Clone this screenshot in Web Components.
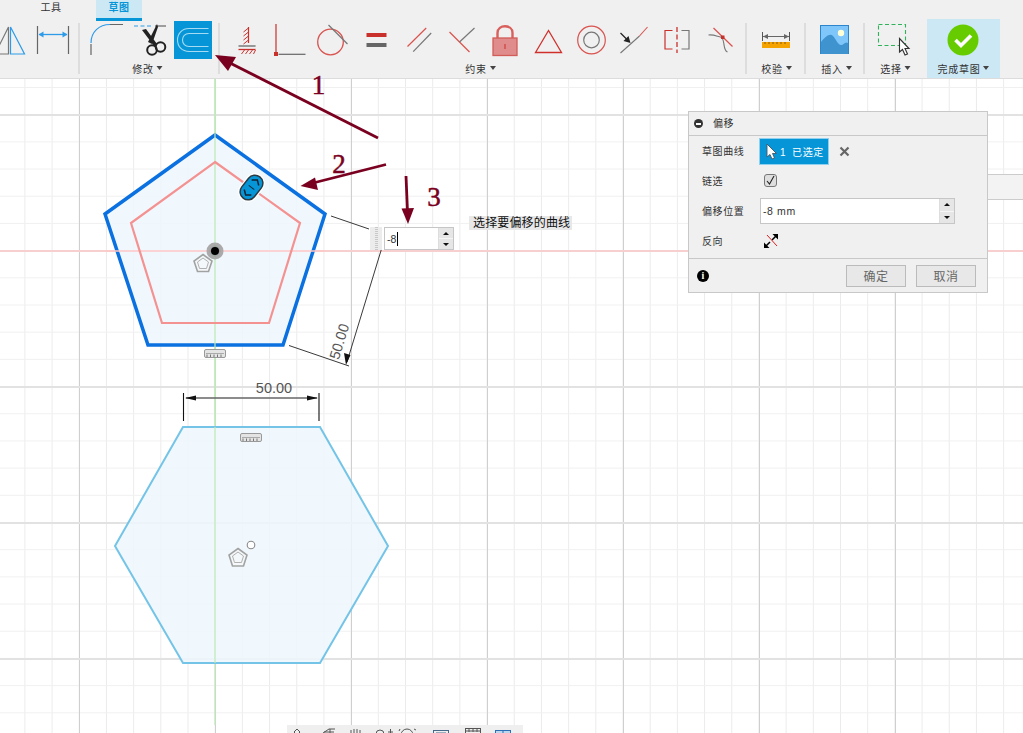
<!DOCTYPE html>
<html lang="zh"><head><meta charset="utf-8"><title>偏移</title>
<style>
html,body{margin:0;padding:0;height:100%;overflow:hidden;background:#fff;font-family:"Liberation Sans","Noto Sans CJK SC",sans-serif}
</style></head><body>
<x-app>
<x-ribbon slot="ribbon">
  <rb-group style="width:78px">
    <rb-tool w="25"><svg width="25" height="38" viewBox="0 21 25 38" fill="none"><path d="M8.5 27V54H-5Z" stroke="#777" stroke-width="1.2"/><path d="M10.5 27V54H24.5Z" stroke="#2d9be8" stroke-width="1.2"/></svg></rb-tool>
    <rb-tool w="12"></rb-tool>
    <rb-tool w="33"><svg width="33" height="38" viewBox="37 21 33 38" fill="none"><path d="M37.5 26V54M68.5 26V54" stroke="#666" stroke-width="1.2"/><path d="M39 34.5H67" stroke="#2d9be8" stroke-width="1.3"/><path d="M38.500 34.500l5-3v6zM67.500 34.500l-5-3v6z" fill="#2d9be8"/></svg></rb-tool>
  </rb-group>
  <rb-sep></rb-sep>
  <rb-group label="修改" offset="-1.5" style="width:138px;padding-left:10px">
    <rb-tool w="34"><svg width="34" height="38" viewBox="90 21 34 38" fill="none"><path d="M91 44V55M110 24.500H123" stroke="#666" stroke-width="1.2"/><path d="M91 43C91 32 99 24.500 110 24.500" stroke="#2d9be8" stroke-width="1.2"/></svg></rb-tool>
    <rb-tool w="10"></rb-tool>
    <rb-tool w="33"><svg width="33" height="38" viewBox="134 21 33 38" fill="none"><path d="M134 26H151" stroke="#2d9be8" stroke-width="1.2" stroke-dasharray="4 2.500"/><path d="M155 26H166" stroke="#666" stroke-width="1.2"/><path d="M142 30l4-1L157 44l-3 2zM157 24l1 3-6 17-4-2z" fill="#222"/><circle cx="152" cy="50" r="4.800" stroke="#222" stroke-width="2"/><circle cx="160.500" cy="47" r="4.800" stroke="#222" stroke-width="2"/></svg></rb-tool>
    <rb-tool w="7"></rb-tool>
    <rb-tool w="38"><svg width="38" height="38" viewBox="174 21 38 38" fill="none"><rect x="174" y="21" width="38" height="38" fill="#0696d7"/><path d="M208.500 28.500H189C182 28.500 177.500 33.500 177.500 40S182 51.500 189 51.500H208.500" stroke="#a5dcf3" stroke-width="1.100"/><path d="M208.500 33.500H189C185 33.500 182.500 36.500 182.500 40S185 46.500 189 46.500H208.500" stroke="#a5dcf3" stroke-width="1.100"/></svg></rb-tool>
  </rb-group>
  <rb-sep></rb-sep>
  <rb-group label="约束" offset="-2" style="width:525px;padding-left:4.5px">
    <rb-tool w="43"><svg width="43" height="38" viewBox="224.500 21 43 38" fill="none"><path d="M248 27V43" stroke="#c9302c" stroke-width="1.200"/><path d="M248 28l-5 4M248 32l-5 4M248 36l-5 4M248 40l-5 4" stroke="#c9302c"/><path d="M238 46H255" stroke="#666" stroke-width="1.300"/><path d="M238 49.500H255" stroke="#c9302c" stroke-width="1.300"/><path d="M241 54l3-4M245 54l3-4M249 54l3-4M253 54l2-4" stroke="#c9302c"/></svg></rb-tool>
    <rb-tool w="43"><svg width="43" height="38" viewBox="267.500 21 43 38" fill="none"><path d="M275.500 24V53" stroke="#c9302c" stroke-width="1.200"/><rect x="273.500" y="52" width="4" height="4" fill="#c9302c"/><path d="M278 54.300H305" stroke="#666" stroke-width="1.200"/></svg></rb-tool>
    <rb-tool w="43"><svg width="43" height="38" viewBox="310.500 21 43 38" fill="none"><circle cx="330" cy="42" r="12.800" stroke="#d9534f" stroke-width="1.300"/><path d="M328 25L347 44" stroke="#777" stroke-width="1.200"/></svg></rb-tool>
    <rb-tool w="43"><svg width="43" height="38" viewBox="353.500 21 43 38"><rect x="366" y="33" width="20" height="4" fill="#c9302c"/><rect x="366" y="43" width="20" height="4" fill="#666"/></svg></rb-tool>
    <rb-tool w="43"><svg width="43" height="38" viewBox="396.500 21 43 38" fill="none"><path d="M407 46.500L425.700 28" stroke="#d9534f" stroke-width="1.200"/><path d="M412.700 51.700L430.700 33" stroke="#777" stroke-width="1.200"/></svg></rb-tool>
    <rb-tool w="43"><svg width="43" height="38" viewBox="439.500 21 43 38" fill="none"><path d="M449 32L469 52" stroke="#d9534f" stroke-width="1.200"/><path d="M459 42L474 28" stroke="#777" stroke-width="1.200"/></svg></rb-tool>
    <rb-tool w="43"><svg width="43" height="38" viewBox="482.500 21 43 38" fill="none"><path d="M497 38V33C497 24 512 24 512 33V38" stroke="#d9605c" stroke-width="2.400"/><rect x="492.500" y="38" width="24" height="17.500" fill="#e08c8c" stroke="#d15c58" stroke-width="1.300"/><path d="M504.500 44V49" stroke="#c9302c"/></svg></rb-tool>
    <rb-tool w="43"><svg width="43" height="38" viewBox="525.500 21 43 38" fill="none"><path d="M548 30.500L535 52.500H561Z" stroke="#d0302c" stroke-width="1.300"/></svg></rb-tool>
    <rb-tool w="43"><svg width="43" height="38" viewBox="568.500 21 43 38" fill="none"><circle cx="591" cy="40" r="13.800" stroke="#d9534f" stroke-width="1.200"/><circle cx="591" cy="40" r="7.800" stroke="#777" stroke-width="1.200"/></svg></rb-tool>
    <rb-tool w="43"><svg width="43" height="38" viewBox="611.500 21 43 38" fill="none"><path d="M620 53L639 36" stroke="#777" stroke-width="1.100"/><path d="M639 36L647 27" stroke="#d9534f" stroke-width="1.100"/><path d="M620 33L626 39" stroke="#222" stroke-width="1.200"/><path d="M630 43l-7-2 5-5z" fill="#222"/></svg></rb-tool>
    <rb-tool w="43"><svg width="43" height="38" viewBox="654.500 21 43 38" fill="none"><path d="M672 30.500H664.500V49H672" stroke="#c9302c" stroke-width="1.200"/><path d="M676.500 27V53" stroke="#c9302c" stroke-width="1.300" stroke-dasharray="5 2.500"/><path d="M681 30.500H688.500V49H681" stroke="#777" stroke-width="1.200"/></svg></rb-tool>
    <rb-tool w="43"><svg width="43" height="38" viewBox="697.500 21 43 38" fill="none"><path d="M713 28L732 46.500" stroke="#d9534f" stroke-width="1.200"/><path d="M708 35C714 34 719 38 721 37M721 37C725 42 722 50 727 52" stroke="#777" stroke-width="1.100"/><rect x="720.500" y="35.500" width="3.500" height="3.500" fill="#c9302c"/></svg></rb-tool>
  </rb-group>
  <rb-sep></rb-sep>
  <rb-group label="校验" offset="1" style="width:57px;padding-left:13px">
    <rb-tool w="32"><svg width="32" height="38" viewBox="760 21 32 38" fill="none"><path d="M762.500 32V41M789.500 32V41" stroke="#555"/><path d="M763 36.500H789" stroke="#666"/><path d="M763 36.500l5-2.500v5zM789 36.500l-5-2.500v5z" fill="#666"/><rect x="762" y="42" width="28" height="6" fill="#f5a300"/><path d="M765 42v2M769 42v2M773 42v2M777 42v2M781 42v2M785 42v2" stroke="#8a5a00"/></svg></rb-tool>
  </rb-group>
  <rb-sep></rb-sep>
  <rb-group label="插入" offset="2" style="width:57px;padding-left:14px">
    <rb-tool w="30"><svg width="30" height="38" viewBox="820 21 30 38"><rect x="820.500" y="25.500" width="28" height="28" fill="#7fc6fb" stroke="#2d86cb"/><path d="M821 54V42C826 36 830 33 833 36C836 39 838 45 841 45C844 45 845 41 848 43V54Z" fill="#3f93cf"/><circle cx="841" cy="33" r="3.200" fill="#ffffd6"/></svg></rb-tool>
  </rb-group>
  <rb-sep></rb-sep>
  <rb-group label="选择" offset="-.5" style="width:62px;padding-left:13px">
    <rb-tool w="40"><svg width="40" height="38" viewBox="878 21 40 38" fill="none"><rect x="878.500" y="24.500" width="27" height="21" stroke="#2fb35a" stroke-width="1.100" stroke-dasharray="4 2.500"/><path d="M899.500 38.500V52L902.500 49.500L905 55L907.500 54L905 48.500H909Z" fill="#fff" stroke="#333" stroke-width="1.100"/></svg></rb-tool>
  </rb-group>
  <rb-group label="完成草图" finish style="width:73px;padding-left:20px">
    <rb-tool w="33"><svg width="33" height="38" viewBox="947 21 33 38"><circle cx="963" cy="40" r="15.500" fill="#66cc00"/><path d="M955.500 40L961 45.500L971 35.500" fill="none" stroke="#fff" stroke-width="3.600"/></svg></rb-tool>
  </rb-group>
</x-ribbon>

<sketch-canvas slot="canvas">
  <side-strip></side-strip>
  <svg slot="drawing" width="1023" height="654" viewBox="0 79 1023 654" font-family="Liberation Sans">
    <path d="M215 79V725" stroke="#bfeab8" stroke-width="1.300"/>
    <path d="M0 251H1023" stroke="#ffc9c9" stroke-width="1.500"/>
    <path d="M215 135L325 214L283 345H148L105 214Z" fill="#eef7fd" fill-opacity=".85" stroke="#0b71e0" stroke-width="3.500"/>
    <path d="M215 79V425" stroke="#bfeab8" stroke-width="1.200"/>
    <path d="M105 251H325" stroke="#ffc9c9" stroke-width="1.500"/>
    <path d="M215 162L300 223L269 323H162L131 223Z" fill="none" stroke="#f49292" stroke-width="2.200"/>
    <path d="M183 427H320L388 546L320 663H183L115 546Z" fill="#eef7fd" fill-opacity=".85" stroke="#74c4e8" stroke-width="2"/>
    <path d="M215 427V663" stroke="#bfeab8" stroke-width="1.200"/>
    <circle cx="215" cy="251" r="7" fill="#555" fill-opacity=".5" stroke="#aaa" stroke-width="3"/><circle cx="215" cy="251" r="4" fill="#000"/>
    <path d="M203 254.500L212 261L208.500 271.500H197.500L194 261Z" fill="#f4f8fa" stroke="#a2a2a2" stroke-width="1.600"/>
    <path d="M203 258L208.500 262L206.500 268.500H199.500L197.500 262Z" fill="none" stroke="#b0b0b0"/>
    <g transform="rotate(38 251.500 187.500)"><rect x="243.500" y="174" width="16" height="27" rx="8" fill="#0696d7" stroke="#fff" stroke-width="4"/><rect x="243.500" y="174" width="16" height="27" rx="8" fill="#0696d7" stroke="#2a3a44" stroke-width="1.500"/><path d="M247 181.500l4.500-3.500 4.500 3.500M247 193.500l4.500 3.500 4.500-3.500" fill="none" stroke="#123" stroke-width="1.500"/><path d="M248 187.500H255" stroke="#123"/></g>
    <g><rect x="204.500" y="349.500" width="21" height="8" rx="1.500" fill="#e4e4e4" stroke="#999"/><path d="M206 353.500H224" stroke="#aaa"/><path d="M207 354.500v2.500M210.500 354.500v2.500M214 354.500v2.500M217.500 354.500v2.500M221 354.500v2.500" stroke="#777"/></g>
    <g transform="translate(36 84)"><rect x="204.500" y="349.500" width="21" height="8" rx="1.500" fill="#e4e4e4" stroke="#999"/><path d="M206 353.500H224" stroke="#aaa"/><path d="M207 354.500v2.500M210.500 354.500v2.500M214 354.500v2.500M217.500 354.500v2.500M221 354.500v2.500" stroke="#777"/></g>
    <path d="M238 548.500L247 555L243.500 566H232.500L229 555Z" fill="#f4f8fa" stroke="#a2a2a2" stroke-width="1.600"/>
    <path d="M238 552L243.500 556L241.500 562.500H234.500L232.500 556Z" fill="none" stroke="#b0b0b0"/>
    <circle cx="251" cy="545" r="3.800" fill="#fff" stroke="#888" stroke-width="1.100"/>
    <path d="M331 216L369 229" stroke="#222" stroke-width=".9"/>
    <path d="M289 345.500L349 366" stroke="#222" stroke-width=".9"/>
    <path d="M381.500 249L347 362" stroke="#222" stroke-width=".9"/>
    <path d="M346 365L344 353L350.500 355Z" fill="#111"/>
    <text x="0" y="0" font-size="14.500" fill="#555" text-anchor="middle" transform="translate(344 343) rotate(-72.800)">50.00</text>
    <path d="M183.500 393V421M319 393V421" stroke="#111" stroke-width="1.100"/>
    <path d="M186 398H317" stroke="#666" stroke-width="1.500"/>
    <path d="M185 398l11-2.500v5zM318 398l-11-2.500v5z" fill="#111"/>
    <text x="274" y="392.500" font-size="14.500" fill="#555" text-anchor="middle">50.00</text>
  </svg>
  <x-float style="left:370px;top:148px"><grip-bar></grip-bar><x-field w="70" h="23" value="-8" caret></x-field></x-float>
  <x-tip style="left:469px;top:137px">选择要偏移的曲线</x-tip>
  <x-panel title="偏移" style="left:688px;top:32px">
    <panel-row label="草图曲线">
      <x-picker>1 已选定</x-picker>
      <svg width="11" height="11" viewBox="0 0 11 11" style="margin-left:10px"><path d="M1.500 1.500L9.500 9.500M9.500 1.500L1.500 9.500" stroke="#666" stroke-width="2.200"/></svg>
    </panel-row>
    <panel-row label="链选"><x-check></x-check></panel-row>
    <panel-row label="偏移位置"><x-field w="195" h="26" value="-8 mm" style="margin-left:1px"></x-field></panel-row>
    <panel-row label="反向"><svg width="14" height="14" viewBox="0 0 14 14" style="margin-left:5px"><path d="M1 13L6 8M8 6L13 1" stroke="#000" stroke-width="1.500"/><path d="M0 14V8.500L5.500 14ZM14 0V5.500L8.500 0Z" fill="#000"/><path d="M3 1L13 12" stroke="#e02020"/></svg></panel-row>
    <x-btn slot="footer">确定</x-btn>
    <x-btn slot="footer">取消</x-btn>
  </x-panel>
  <nav-bar>
    <svg width="236" height="8" viewBox="287 725 236 8" fill="none" stroke="#555">
      <path d="M297 729l3 3-3 3-3-3z"/><path d="M323 733l6-4h6M330 729v5M324 732h10"/>
      <path d="M351 733v-3M354 733v-4M357 733v-4M360 733v-3"/><circle cx="380" cy="734" r="4"/><path d="M388 732h5M390.500 729v5"/>
      <circle cx="407" cy="735" r="6"/><path d="M414 729l2 1M400 729l-1 2"/>
      <rect x="433.500" y="730.500" width="15" height="8" stroke="#46688a"/><path d="M436 733h10" stroke="#46688a"/>
      <rect x="465.500" y="728.500" width="15" height="8"/><path d="M465 731h16M469 729v3M473 729v3M477 729v3"/>
      <rect x="495.500" y="730.500" width="15" height="8" stroke="#2a6fb5" fill="#bcd6ee"/><path d="M503 730v4" stroke="#2a6fb5"/>
    </svg>
  </nav-bar>
</sketch-canvas>

<x-annot slot="annot">
  <svg width="1023" height="733" viewBox="0 0 1023 733" font-family="Liberation Serif">
    <path d="M378 138L228 62" stroke="#7a0020" stroke-width="2.800"/><path d="M215 55L236 57L228 71Z" fill="#7a0020"/>
    <path d="M386 164.500L313 183" stroke="#7a0020" stroke-width="2.800"/><path d="M300.500 186L315 177.500L318 190Z" fill="#7a0020"/>
    <path d="M406 176L407.500 212" stroke="#7a0020" stroke-width="2.800"/><path d="M408 224L401.500 208.500L414 208Z" fill="#7a0020"/>
    <g font-size="27" fill="#7a0020" stroke="#7a0020" stroke-width=".5" text-anchor="middle">
      <text x="318.500" y="94">1</text>
      <text x="339" y="173">2</text>
      <text x="434" y="206">3</text>
    </g>
  </svg>
</x-annot>
</x-app>

<script>
const CJK='"Liberation Sans","Noto Sans CJK SC",sans-serif';
function def(name,css,html,init){
  customElements.define(name,class extends HTMLElement{
    constructor(){super();const r=this.attachShadow({mode:'open'});
      r.innerHTML='<style>'+css+'</style>'+(typeof html==='function'?html(this):html);}
    connectedCallback(){ if(init) init(this); }
  });
}
def('x-app',`:host{display:flex;flex-direction:column;position:relative;width:1023px;height:733px;overflow:hidden;font-family:${CJK}}
  ::slotted(x-annot){position:absolute;inset:0;pointer-events:none}`,
  `<slot name="ribbon"></slot><slot name="canvas"></slot><slot name="annot"></slot>`);
def('x-ribbon',`:host{display:block;height:78px;background:#f0f0f0;border-bottom:1px solid #dcdcdc;flex:none}
  .tabs{display:flex;height:21px;padding-left:28px;font-size:10px;letter-spacing:.6px}
  .t{width:46px;text-align:center;line-height:16px;color:#333}
  .on{margin-left:22px;background:#cce8f5;color:#0696d7;font-weight:700;border-bottom:3px solid #0696d7;box-sizing:border-box;height:21px}
  .row{display:flex;height:57px}`,
  `<div class="tabs"><div class="t">工具</div><div class="t on">草图</div></div><div class="row"><slot></slot></div>`);
def('rb-group',`:host{display:block;box-sizing:border-box;flex:none;height:57px;position:relative}
  :host([finish]){background:#cce8f5;height:59px;margin-top:-2px;padding-top:2px}
  .i{display:flex;height:38px}
  .l{position:absolute;left:0;right:0;top:37px;display:flex;justify-content:center;align-items:center;gap:3px;height:20px;font-size:10px;letter-spacing:.7px;color:#333;white-space:nowrap}
  :host([finish]) .l{top:39px}
  i{width:0;height:0;border:3.500px solid transparent;border-top:4px solid #444;border-bottom:0}`,
  h=>`<div class="i"><slot></slot></div>`+(h.getAttribute('label')?`<div class="l" style="transform:translateX(${h.getAttribute('offset')||0}px)">${h.getAttribute('label')}<i></i></div>`:''));
def('rb-tool',`:host{display:block;flex:none;height:38px}::slotted(svg){display:block;overflow:visible}`,`<slot></slot>`,h=>{h.style.width=h.getAttribute('w')+'px'});
def('rb-sep',`:host{display:block;flex:none;width:2px;height:51px;margin-top:2px;background:#dddddd}`,``);
def('sketch-canvas',`:host{display:block;position:relative;flex:1;overflow:hidden;background-color:#fff;
  background-repeat:repeat;background-size:136px 136px,136px 136px,27.200px 27.200px,27.200px 27.200px;
  background-image:linear-gradient(#e2e2e2 2px,transparent 2px),linear-gradient(90deg,#cfcfcf 1.400px,transparent 1.400px),linear-gradient(#f0f0f0 1.400px,transparent 1.400px),linear-gradient(90deg,#ebebeb 1.200px,transparent 1.200px);
  background-position:0 35px,79px 0,0 8px,24.400px 0}
  ::slotted(svg){position:absolute;left:0;top:0;display:block}`,
  `<slot name="drawing"></slot><slot></slot>`);
def('side-strip',`:host{position:absolute;left:988px;right:0;top:95px;height:24px;background:#f3f3f3;border-top:1px solid #ccc;border-bottom:1px solid #ccc}`,``);
def('x-float',`:host{position:absolute;display:flex;align-items:stretch;height:23px}`,`<slot></slot>`);
def('grip-bar',`:host{display:block;width:12px;margin-right:2px;background-color:#ececec;background-image:repeating-linear-gradient(#c8c8c8 0 1px,transparent 1px 2px);background-size:3px 100%;background-repeat:no-repeat;background-position:5px 0}`,``);
def('x-field',`:host{display:flex;box-sizing:border-box;background:#fff;border:1px solid #c6c6c6;font:10.500px ${CJK};color:#333}
  .v{flex:1;padding-left:2px;display:flex;align-items:center}
  .c{display:inline-block;width:1px;height:14px;background:#000;margin-left:1px}
  .s{width:14px;background:#e6e6e6;display:flex;flex-direction:column;border-left:1px solid #ddd}
  .s div{flex:1;display:flex;align-items:center;justify-content:center}
  .s div+div{border-top:1px solid #f6f6f6}
  .u{width:0;height:0;border:3px solid transparent;border-bottom:3.500px solid #111;border-top:0}
  .d{width:0;height:0;border:3px solid transparent;border-top:3.500px solid #111;border-bottom:0}`,
  h=>`<div class="v">${h.getAttribute('value')}${h.hasAttribute('caret')?'<span class="c"></span>':''}</div><div class="s"><div><span class="u"></span></div><div><span class="d"></span></div></div>`,
  h=>{h.style.width=h.getAttribute('w')+'px';h.style.height=h.getAttribute('h')+'px'});
def('x-tip',`:host{position:absolute;display:block;height:14px;padding:0 2px 0 4px;background:#e8e8e8;font:12px/14px ${CJK};letter-spacing:.15px;color:#111;white-space:nowrap}`,`<slot></slot>`);
def('x-panel',`:host{position:absolute;display:block;box-sizing:border-box;width:300px;height:182px;background:#f0f0f0;border:1px solid #c8c8c8;font:10px ${CJK};color:#333;letter-spacing:.6px}
  header{display:flex;align-items:center;height:23px;border-bottom:1px solid #c8c8c8;padding-left:5px;gap:10px}
  header b{position:relative;width:9px;height:9px;border-radius:50%;background:#333}
  header b::after{content:"";position:absolute;left:2px;right:2px;top:3.500px;height:2px;background:#fff}
  header span{position:relative;top:-1px}
  .body{height:122px;border-bottom:1px solid #c8c8c8}
  footer{display:flex;align-items:center;height:34px;padding:0 11px 0 8px;gap:10px}
  .inf{width:12px;height:12px;border-radius:50%;background:#000;color:#fff;font:bold 10px/12px "Liberation Serif",serif;text-align:center;margin-right:auto;letter-spacing:0}`,
  h=>`<header><b></b><span>${h.getAttribute('title')}</span></header><div class="body"><slot></slot></div><footer><div class="inf">i</div><slot name="footer"></slot></footer>`);
def('panel-row',`:host{display:flex;align-items:center;height:30px;padding-left:13px}
  .l{width:57px;flex:none;color:#333;padding-bottom:2px}`,
  h=>`<div class="l">${h.getAttribute('label')}</div><slot></slot>`);
def('x-picker',`:host{display:flex;align-items:center;box-sizing:border-box;width:70px;height:27px;background:#0696d7;border:1px solid #8fd0ee;color:#fff;padding-left:6px;gap:3px;font-size:10px;letter-spacing:.6px;word-spacing:2.500px;white-space:nowrap}
  svg{flex:none}`,
  `<svg width="11" height="17" viewBox="0 0 11 17"><path d="M1 1V14L4 11.500L6 16L8.500 15L6.500 10.500H10.500Z" fill="#fff" stroke="#456" stroke-width=".9"/></svg><slot></slot>`);
def('x-check',`:host{display:block;box-sizing:border-box;width:13px;height:13px;margin:0 0 2px 5px;border:1px solid #777;border-radius:3px;background:#dedede}
  svg{display:block}`,
  `<svg width="11" height="11" viewBox="0 0 11 11"><path d="M2 6L4.500 9L9 1" fill="none" stroke="#222" stroke-width="1.100"/></svg>`);
def('x-btn',`:host{display:block;box-sizing:border-box;width:60px;height:22px;border:1px solid #bbb;background:#e8e8e8;color:#666;text-align:center;font-size:12px;line-height:22px;letter-spacing:.6px}`,`<slot></slot>`);
def('nav-bar',`:host{position:absolute;left:287px;bottom:0;width:236px;height:8px;background:#efefef;overflow:hidden}::slotted(svg){display:block}`,`<slot></slot>`);
def('x-annot',`:host{display:block}::slotted(svg){display:block}`,`<slot></slot>`);
</script>
</body></html>
